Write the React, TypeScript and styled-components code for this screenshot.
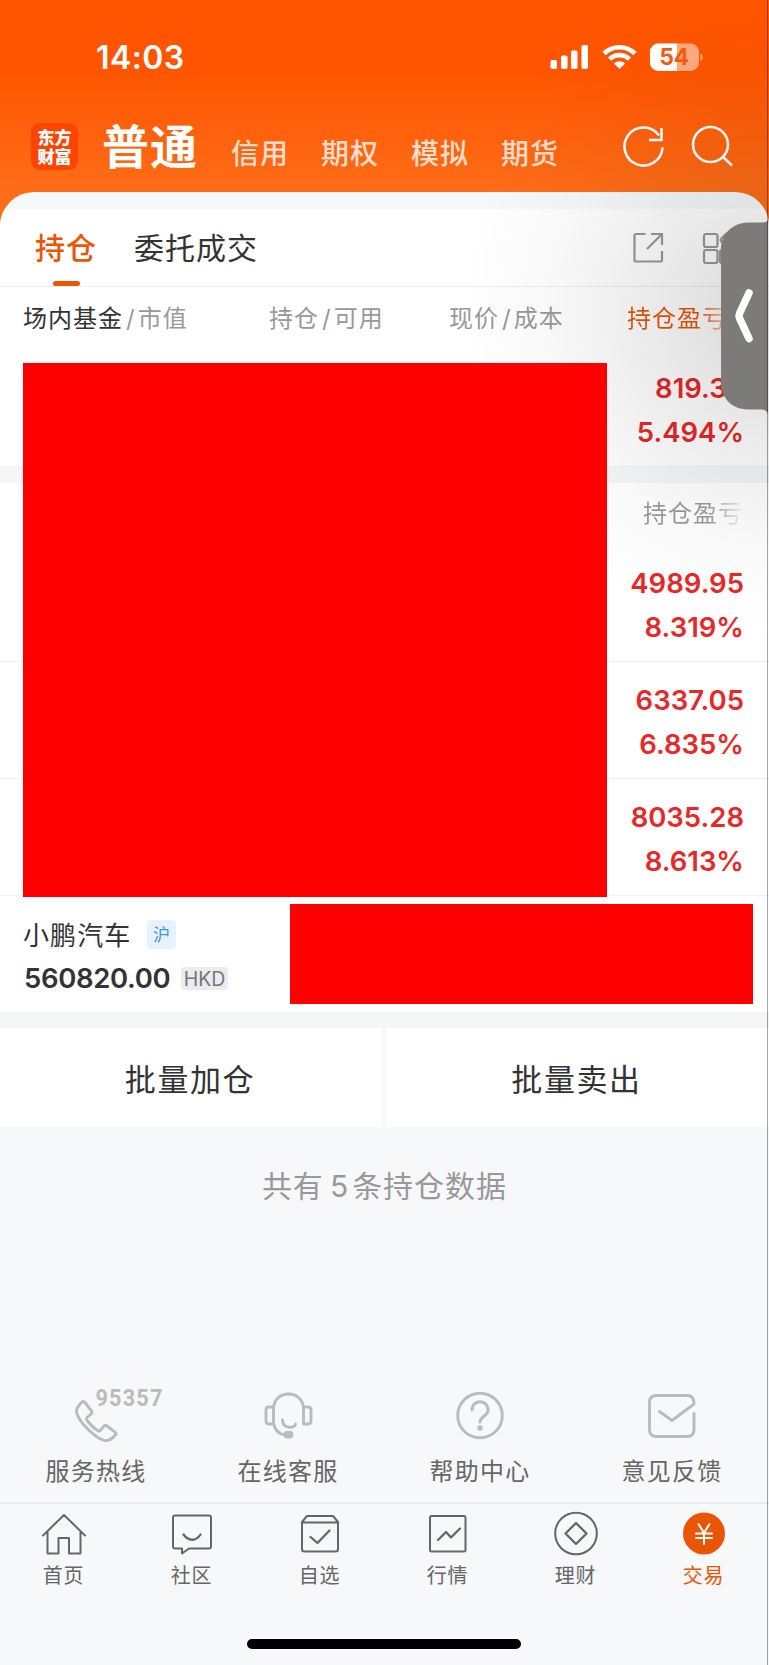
import React from 'react';
import styled, { createGlobalStyle } from 'styled-components';

const Global = createGlobalStyle`
  *{box-sizing:border-box}
  body{margin:0;background:#f7f8fa;font-family:"Noto Sans CJK SC",sans-serif;color:#333}
`;
const Screen = styled.div`
  position:relative;width:769px;height:1665px;overflow:hidden;display:flex;flex-direction:column;background:#f7f8fa;
`;
const Hero = styled.header`
  height:226px;flex:none;background:linear-gradient(#ff5500 0,#ff5500 70px,#ff6d18 192px,#ff6d18);margin-bottom:-34px;
`;
const StatusBar = styled.div`
  height:104px;display:flex;align-items:flex-start;padding:38px 64px 0 96px;color:#fff;
`;
const Clock = styled.div`
  font:600 32px/39px Inter,sans-serif;letter-spacing:.4px;flex:1;
`;
const StatusIcons = styled.svg`width:156px;height:30px;margin-top:4px;display:block;`;
const NavBar = styled.nav`display:flex;height:88px;padding-left:31px;align-items:flex-start;color:#fff;`;
const Logo = styled.div`
  width:47px;height:47px;margin-top:19px;border-radius:9px;background:#ff4400;padding-top:4px;
  text-align:center;font:900 17px/19px "Noto Sans CJK SC",sans-serif;flex:none;
`;
const NavTitle = styled.div`margin:6px 0 0 24px;width:129px;font-size:47px;line-height:68px;font-weight:700;letter-spacing:1px;white-space:nowrap;`;
const NavLink = styled.div`margin-top:27px;width:90px;font-size:28px;line-height:42px;font-weight:500;letter-spacing:1px;color:rgba(255,255,255,.8);`;
const NavIcons = styled.svg`width:116px;height:48px;margin:19px 0 0 31px;`;

const Sheet = styled.main`position:relative;flex:none;height:935px;border-radius:34px 34px 0 0;background:#f7f8fa;overflow:hidden;padding-top:17px;display:flex;flex-direction:column;`;
const Tabs = styled.div`height:78px;flex:none;background:#fff;border-bottom:1px solid #eee;display:flex;padding-left:35px;align-items:flex-start;`;
const Tab = styled.div<{ $on?: boolean }>`
  position:relative;height:77px;margin-right:37px;padding-top:14px;font-size:30px;line-height:46px;letter-spacing:1px;
  font-weight:${p => (p.$on ? 500 : 400)};color:${p => (p.$on ? '#ea5504' : '#333')};
  ${p => p.$on && '&::after{content:"";position:absolute;left:18px;bottom:0;width:27px;height:5.5px;border-radius:3px;background:#ea5504}'}
`;
const TabIcons = styled.svg`width:110px;height:32px;margin:23px 26px 0 auto;`;
const Columns = styled.div<{ $first?: boolean }>`
  height:${p => (p.$first ? 63 : 62)}px;flex:none;background:#fff;display:grid;grid-template-columns:246px 180px 178px 1fr;padding-left:23px;
  font-size:24px;line-height:36px;letter-spacing:1px;color:#999;padding-top:${p => (p.$first ? 12 : 11)}px;white-space:nowrap;
`;
const Strong = styled.span`color:#333;`;
const Slash = styled.span`padding:0 2px 0 3px;font-family:Inter,sans-serif;`;
const Gain = styled.span<{ $shift?: boolean; $color: string }>`
  padding-left:${p => (p.$shift ? 16 : 0)}px;
  background:linear-gradient(90deg,${p => p.$color} ${p => (p.$shift ? 80 : 70)}px,transparent ${p => (p.$shift ? 120 : 112)}px);
  background-clip:text;color:transparent;
`;
const Row = styled.div`height:117px;flex:none;background:#fff;border-bottom:1px solid #f1f1f3;display:flex;justify-content:space-between;`;
const Figures = styled.div`
  margin-left:auto;padding:15.5px 25px 0 0;text-align:right;color:#e82828;font:600 27.5px/44.3px Inter,sans-serif;
`;
const Gap = styled.div<{ $h: number }>`height:${p => p.$h}px;flex:none;background:#f5f6f8;`;
const Redaction = styled.div<{ $x: number; $y: number; $w: number; $h: number }>`
  position:absolute;left:${p => p.$x}px;top:${p => p.$y}px;width:${p => p.$w}px;height:${p => p.$h}px;background:#f00;
`;
const Stock = styled.div`padding:19px 0 0 24px;`;
const StockLine = styled.div`display:flex;align-items:center;height:38px;margin-bottom:6px;`;
const StockName = styled.span`font-size:26px;line-height:38px;letter-spacing:1.1px;width:124px;margin-left:-1px;white-space:nowrap;`;
const Market = styled.span`width:29px;height:29px;border-radius:4px;background:#e8f2fc;color:#4090f0;font-size:17px;line-height:28px;text-align:center;`;
const Amount = styled.span`font:600 27.5px/38px Inter,sans-serif;letter-spacing:-.35px;width:157px;`;
const Currency = styled.span`width:47px;height:23px;border-radius:4px;background:#ebebf0;color:#777;font:400 19.5px/24px Inter,sans-serif;text-align:center;`;
const Actions = styled.div`display:grid;grid-template-columns:382px 1fr;gap:4px;height:98px;flex:none;`;
const Action = styled.div`background:#fff;font-size:31px;line-height:99px;text-align:center;letter-spacing:1.6px;padding-right:2px;`;

const Summary = styled.p`margin:0;height:247px;padding-top:34px;text-align:center;font-size:30px;line-height:46px;letter-spacing:1px;color:#999;`;
const Count = styled.span`font-family:Inter,sans-serif;padding:0 3px 0 6px;`;
const Services = styled.div`display:grid;grid-template-columns:repeat(4,192px);height:129px;flex:none;`;
const Service = styled.div`display:flex;flex-direction:column;align-items:center;font-size:24px;line-height:36px;letter-spacing:1.3px;color:#666;`;
const ServiceIcon = styled.svg`width:192px;height:66px;margin:1px 0 12px;overflow:visible;fill:none;stroke:#bbb;stroke-width:2.9;stroke-linecap:round;stroke-linejoin:round;`;
const TabBar = styled.footer`border-top:2px solid #e9ebf0;display:grid;grid-template-columns:repeat(6,128px);height:163px;flex:none;`;
const BarItem = styled.div<{ $on?: boolean }>`
  display:flex;flex-direction:column;align-items:center;padding-right:1px;font-size:20px;line-height:30px;letter-spacing:.7px;color:${p => (p.$on ? '#ea5504' : '#666')};
`;
const BarIcon = styled.svg`width:48px;height:48px;margin:7px 0 1px;fill:none;stroke:#666;stroke-width:2;stroke-linejoin:round;stroke-linecap:round;`;
const HomeBar = styled.div`position:absolute;left:247px;top:1639px;width:274px;height:10px;border-radius:5px;background:#000;`;
const Shade = styled.div`
  position:absolute;inset:0;pointer-events:none;
  background:radial-gradient(ellipse 310px 320px at 769px 315px,rgba(0,0,0,.15),rgba(0,0,0,.085) 35%,rgba(0,0,0,.028) 70%,transparent);
`;
const Handle = styled.svg`position:absolute;right:0;top:216px;width:50px;height:202px;`;
const Edge = styled.div`position:absolute;right:1px;top:0;width:1px;height:100%;background:rgba(0,0,0,.35);`;

const barLabels = ['首页', '社区', '自选', '行情', '理财', '交易'];
const barIcons = [
  <><path d="M3 24.5 24 4l21 20.5M7.500 21V42.500H18.500V27H29V42.500H40.500V21" /></>,
  <><path d="M7 4.500H41Q43 4.500 43 6.500V35.500Q43 37.500 41 37.500H21L14 42.500V37.500H7Q5 37.500 5 35.500V6.500Q5 4.500 7 4.500Z" /><path d="M15.500 23.500c5 7 12.500 7 17 0" strokeWidth="2.300" /></>,
  <><path d="M6 11 11 5H37L42 11V38Q42 40.500 39.500 40.500H8.500Q6 40.500 6 38ZM6 11.500H42" /><path d="m14.500 26 7 6L33.500 19.500" strokeWidth="2.300" /></>,
  <><rect x="6" y="5" width="35.500" height="35.500" rx="1.500" /><path d="m14 29 8-8 5 5.500 9-9" strokeWidth="2.300" /></>,
  <><circle cx="24" cy="22.500" r="20.800" /><path d="m24 12 10.500 10.500L24 33 13.500 22.500Z" strokeWidth="2.300" /></>,
  <><circle cx="24" cy="22.500" r="21" fill="#ea5504" stroke="none" /><path d="m18.500 13 5.500 9 5.500-9M16 22.500h16M16 27h16M24 22.500v10.500" stroke="#fff" strokeWidth="2" /></>,
];
const holdings = [['4989.95', '8.319%'], ['6337.05', '6.835%'], ['8035.28', '8.613%']];

export default function App() {
  return (
    <Screen>
      <Global />
      <Hero>
        <StatusBar>
          <Clock>14:03</Clock>
          <StatusIcons viewBox="0 0 156 30" fill="#fff">
            <rect x="1.500" y="18" width="6.500" height="9" rx="1.800" /><rect x="12" y="13.500" width="6.500" height="13.500" rx="1.800" />
            <rect x="22" y="8.500" width="6.500" height="18.500" rx="1.800" /><rect x="32.500" y="3" width="6.500" height="24" rx="1.800" />
            <g fill="none" stroke="#fff" strokeWidth="4.600"><path d="M55 11.500c8.500-8.300 22.500-8.300 31 0" /><path d="M60.500 17.200c5.500-5.400 14.500-5.400 20 0" /></g>
            <path d="m65 21.500c3-3 8-3 11.200 0L70.600 27Z" />
            <rect x="101" y="1.500" width="49" height="27.500" rx="8.500" fillOpacity=".5" />
            <path d="M128 1.500H109.500a8.500 8.500 0 0 0-8.500 8.500v10.500a8.500 8.500 0 0 0 8.500 8.500H128Z" />
            <path d="M151.500 11.500c3 1.500 3 6 0 7.500Z" fillOpacity=".5" />
            <text x="125.200" y="23.200" textAnchor="middle" fontFamily="Inter,sans-serif" fontSize="22.500" fontWeight="700" fill="#fb5b0a">54</text>
          </StatusIcons>
        </StatusBar>
        <NavBar>
          <Logo>东方<br />财富</Logo>
          <NavTitle>普通</NavTitle>
          <NavLink>信用</NavLink><NavLink>期权</NavLink><NavLink>模拟</NavLink><NavLink>期货</NavLink>
          <NavIcons viewBox="0 0 116 48" fill="none" stroke="#fff" strokeWidth="2.600">
            <path d="M40.500 24.500A19 19 0 1 1 37 12.500M39.500 5V17H27" />
            <circle cx="88.500" cy="21.500" r="17.500" /><path d="m101 34 9 8.500" />
          </NavIcons>
        </NavBar>
      </Hero>
      <Sheet>
        <Tabs>
          <Tab $on>持仓</Tab><Tab>委托成交</Tab>
          <TabIcons viewBox="0 0 110 32" fill="none" stroke="#999" strokeWidth="2.200">
            <path d="M12.500 2H3Q1.500 2 1.500 3.500V28Q1.500 29.500 3 29.500H27.500Q29 29.500 29 28V19M18 2H29V13M28.500 2.500 14 17" />
            <rect x="71" y="2" width="13.500" height="13" rx="2" /><rect x="71" y="18" width="13.500" height="13" rx="2" /><rect x="87" y="18" width="13.500" height="13" rx="2" /><rect x="89" y="3" width="10" height="10" rx="2" transform="rotate(45 94 8)" />
          </TabIcons>
        </Tabs>
        <Columns $first>
          <span><Strong>场内基金</Strong><Slash>/</Slash>市值</span>
          <span>持仓<Slash>/</Slash>可用</span><span>现价<Slash>/</Slash>成本</span><Gain $color="#ea5504">持仓盈亏</Gain>
        </Columns>
        <Row><Figures>819.35<br />5.494%</Figures></Row>
        <Gap $h={16} />
        <Columns><span /><span /><span /><Gain $shift $color="#999">持仓盈亏</Gain></Columns>
        {holdings.map(([value, rate]) => <Row key={value}><Figures>{value}<br />{rate}</Figures></Row>)}
        <Row>
          <Stock>
            <StockLine><StockName>小鹏汽车</StockName><Market>沪</Market></StockLine>
            <StockLine><Amount>560820.00</Amount><Currency>HKD</Currency></StockLine>
          </Stock>
        </Row>
        <Gap $h={15} />
        <Actions><Action>批量加仓</Action><Action>批量卖出</Action></Actions>
      </Sheet>
      <Summary>共有<Count>5</Count>条持仓数据</Summary>
      <Services>
        <Service>
          <ServiceIcon viewBox="0 0 192 66">
            <path d="M81.500 28.500Q83.300 26.500 85 28.500L91.500 37Q92.500 38.500 91.300 39.800L87 43.500Q86 45 87 46.500Q92 53 98 56.800Q99.300 57.600 100.400 56.300L104 52Q105.300 50.700 107 52L115.300 58.300Q116.500 59.500 115.300 61Q109.500 68 104 66.300Q96 64.500 83 50Q75.500 40 76.500 36Q77 33.500 81.500 28.500Z" />
            <text x="129.500" y="31.500" textAnchor="middle" textLength="68" lengthAdjust="spacingAndGlyphs" fontFamily="Roboto,sans-serif" fontWeight="700" fontSize="24" fill="#bbb" stroke="none">95357</text>
          </ServiceIcon>服务热线
        </Service>
        <Service>
          <ServiceIcon viewBox="0 0 192 66">
            <path d="M81.500 49V35c0-20 30-20 30 0v14M81.500 33H77q-3 0-3 3v11q0 3 3 3h4.500M111.500 33h4.500q3 0 3 3v11q0 3-3 3h-4.500M81.500 49q2 11 12 12M90.500 46c0 9 13 9 13 4" />
            <rect x="93" y="58.500" width="7" height="4.500" rx="2" fill="#bbb" />
          </ServiceIcon>在线客服
        </Service>
        <Service>
          <ServiceIcon viewBox="0 0 192 66">
            <circle cx="96" cy="41.500" r="22.300" /><path d="M88 36c0-11 16-11 16 0 0 6-8 6.500-8 12" strokeWidth="3" /><circle cx="96" cy="54" r="1.300" fill="#bbb" />
          </ServiceIcon>帮助中心
        </Service>
        <Service>
          <ServiceIcon viewBox="0 0 192 66">
            <path d="M118 39.500V55.500Q118 62.500 111 62.500H80.500Q73.500 62.500 73.500 55.500V28.500Q73.500 21.500 80.500 21.500H111.500Q118 21.500 118 30L96 46.500 83.500 37.500" />
          </ServiceIcon>意见反馈
        </Service>
      </Services>
      <TabBar>
        {barLabels.map((label, i) => (
          <BarItem key={label} $on={i === 5}><BarIcon viewBox="0 0 48 48">{barIcons[i]}</BarIcon>{label}</BarItem>
        ))}
      </TabBar>
      <HomeBar />
      <Shade />
      <Redaction $x={22.5} $y={362.7} $w={584.5} $h={534.5} />
      <Redaction $x={290.3} $y={904} $w={462.5} $h={99.5} />
      <Handle viewBox="0 0 50 202">
        <path d="M49 4Q48 6.500 43 6.500H29C13 7 2 18 2 34V165C2 182 12 193 29 193.500H43Q48 194 49 198Z" fill="#7d7b7a" />
        <path d="M30 77 20.500 97.500q-1 2.300 0 4.600L30 122.500" fill="none" stroke="#fff" strokeWidth="7.500" strokeLinecap="round" />
      </Handle>
      <Edge />
    </Screen>
  );
}
